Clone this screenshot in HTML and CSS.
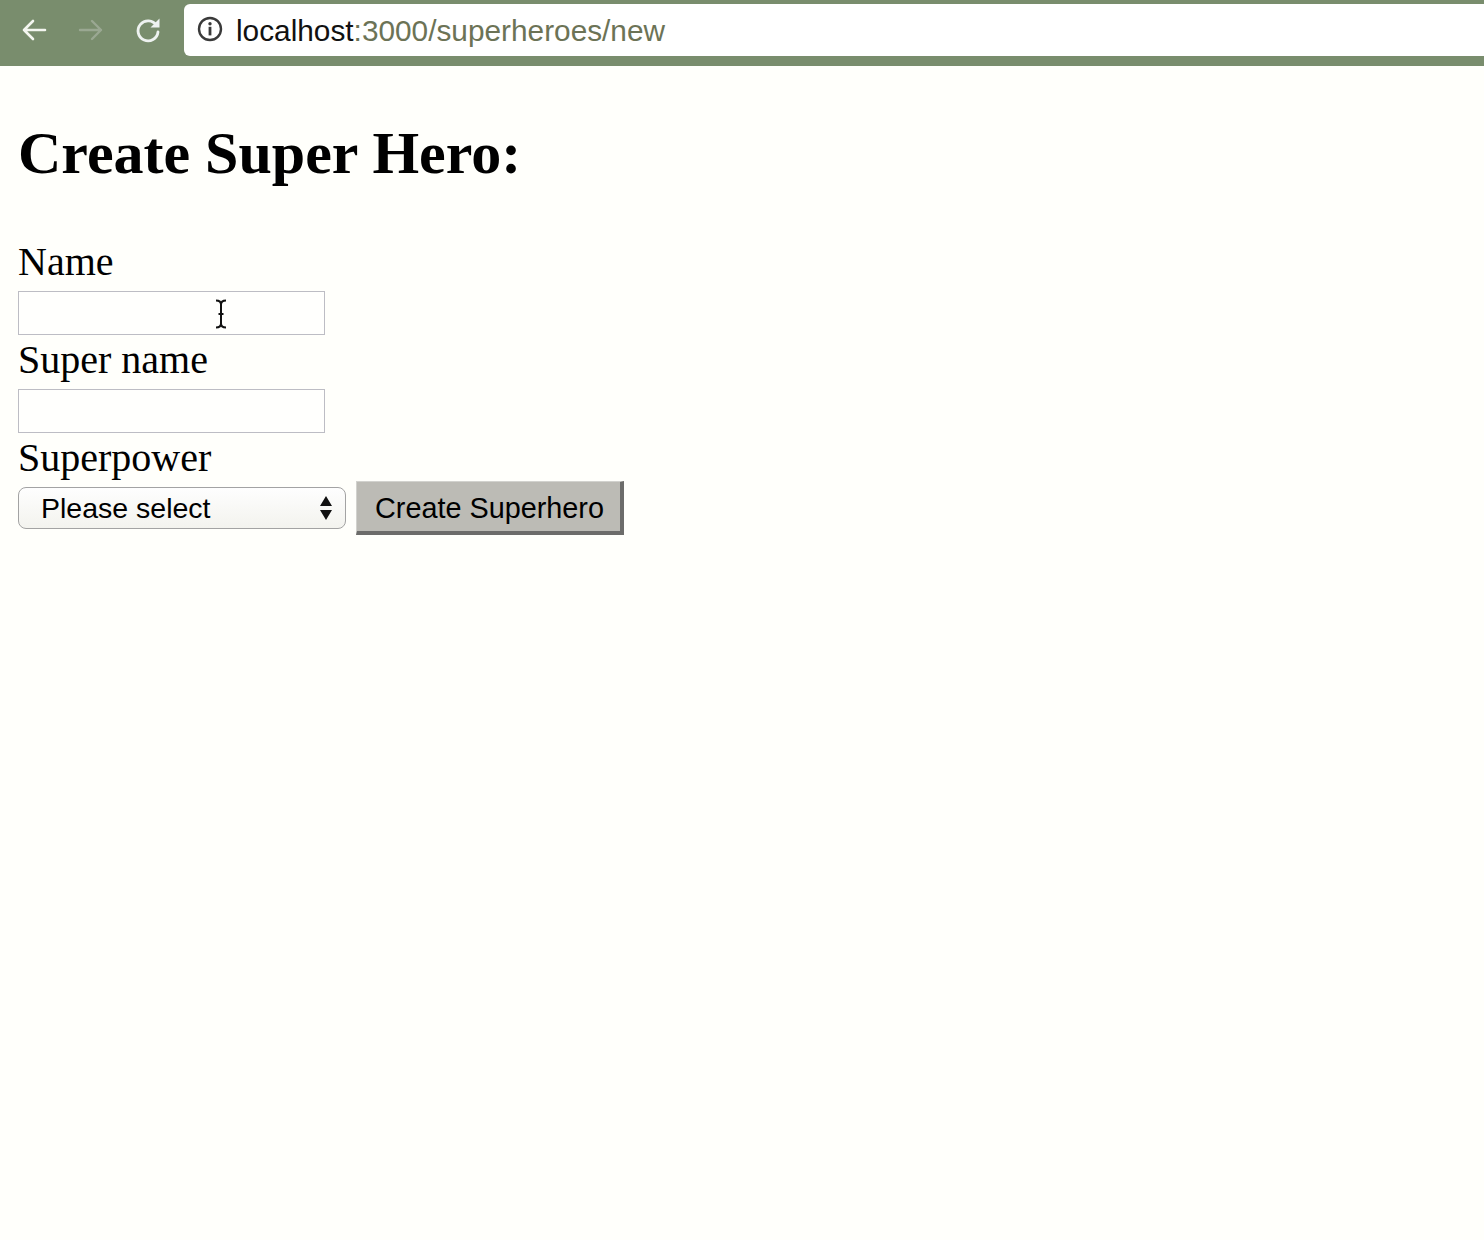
FILE: index.html
```html
<!DOCTYPE html>
<html>
<head>
<meta charset="utf-8">
<title>Create Super Hero</title>
<link rel="stylesheet" href="styles.css">
</head>
<body>
<div class="toolbar">
  <div class="navs">
    <svg class="nav" width="30" height="30" viewBox="0 0 30 30"><path d="M26 15H5M14 6l-9 9 9 9" fill="none" stroke="#f4f6f0" stroke-width="2.6" stroke-linecap="round" stroke-linejoin="round"/></svg>
    <svg class="nav" width="30" height="30" viewBox="0 0 30 30"><path d="M4 15h21M16 6l9 9-9 9" fill="none" stroke="#9aa892" stroke-width="2.4" stroke-linecap="round" stroke-linejoin="round"/></svg>
    <svg class="nav" width="30" height="30" viewBox="0 0 30 30"><path d="M23.5 10.5A10 10 0 1 0 25 17" fill="none" stroke="#eef2f0" stroke-width="2.8" stroke-linecap="round"/><path d="M26.5 3.5v9h-9z" fill="#eef2f0"/></svg>
  </div>
  <div class="omnibox">
    <svg class="info" width="28" height="28" viewBox="0 0 28 28"><circle cx="14" cy="14" r="11" fill="none" stroke="#3a3a3a" stroke-width="2.4"/><circle cx="14" cy="8.8" r="1.7" fill="#3a3a3a"/><rect x="12.6" y="11.8" width="2.8" height="8.6" fill="#3a3a3a"/></svg>
    <span class="url"><span class="host">localhost</span><span class="path">:3000/superheroes/new</span></span>
  </div>
</div>
<main class="page">
  <h1 class="title">Create Super Hero:</h1>
  <form class="form">
    <label class="label" for="name">Name</label>
    <div class="field">
      <input class="text-input" id="name" type="text">
      <svg class="ibeam" width="14" height="30" viewBox="0 0 14 30"><path d="M2 1.5c3 0 5 1.5 5 4v19c0 2.5 2 4 5 4M12 1.5c-3 0-5 1.5-5 4v19c0 2.5-2 4-5 4M4.5 15h5" fill="none" stroke="#111" stroke-width="2"/></svg>
    </div>
    <label class="label" for="supername">Super name</label>
    <div class="field">
      <input class="text-input" id="supername" type="text">
    </div>
    <label class="label last" for="power">Superpower</label>
    <div class="actions">
      <div class="select-wrap">
        <select class="select" id="power"><option>Please select</option></select>
        <svg class="arrows" width="14" height="26" viewBox="0 0 14 26"><path d="M7 1l6 10H1zM7 25l6-10H1z" fill="#111"/></svg>
      </div>
      <button class="button" type="button">Create Superhero</button>
    </div>
  </form>
</main>
</body>
</html>
```

FILE: styles.css
```css
html, body {
  margin: 0;
  padding: 0;
}
body {
  background: #fffffb;
  width: 1484px;
  height: 1240px;
  overflow: hidden;
}
.toolbar {
  height: 66px;
  background: #798d6d;
  display: flex;
  align-items: flex-start;
  padding-top: 4px;
  box-sizing: border-box;
}
.navs {
  display: flex;
  align-items: center;
  height: 52px;
  padding-left: 19px;
  gap: 27px;
  width: 165px;
  box-sizing: border-box;
}
.nav {
  display: block;
}
.omnibox {
  flex: 1;
  height: 52px;
  background: #ffffff;
  border-radius: 6px 0 0 6px;
  margin-left: 19px;
  display: flex;
  align-items: center;
  padding-left: 12px;
}
.info {
  display: block;
  margin-right: 12px;
  margin-bottom: 2px;
}
.url {
  font-family: "Liberation Sans", Arial, sans-serif;
  font-size: 29.8px;
  line-height: 1;
  padding-top: 2px;
}
.host {
  color: #111111;
}
.path {
  color: #6c7356;
}
.page {
  padding: 0 18px;
}
.title {
  font-family: "Liberation Serif", "Times New Roman", serif;
  font-weight: bold;
  font-size: 60px;
  line-height: 60px;
  margin: 57px 0 0 0;
  color: #000;
}
.form {
  margin-top: 54px;
  display: flex;
  flex-direction: column;
  align-items: flex-start;
}
.label {
  display: block;
  font-family: "Liberation Serif", "Times New Roman", serif;
  font-size: 40px;
  line-height: 46px;
  margin: 2px 0 6px 0;
  color: #000;
}
.label.last {
  margin-bottom: 0;
}
.field {
  position: relative;
}
.text-input {
  display: block;
  width: 307px;
  height: 44px;
  box-sizing: border-box;
  border: 1px solid #bdbdc4;
  background: #fffffd;
  margin: 0;
  padding: 0;
  outline: none;
}
.ibeam {
  position: absolute;
  left: 196px;
  top: 8px;
}
.actions {
  display: flex;
  align-items: center;
  gap: 10px;
}
.select-wrap {
  position: relative;
}
.select {
  appearance: none;
  -webkit-appearance: none;
  display: block;
  width: 328px;
  height: 42px;
  box-sizing: border-box;
  border: 1px solid #a3a3a3;
  border-radius: 8px;
  background: linear-gradient(#fefefe, #f3f3ee);
  font-family: "Liberation Sans", Arial, sans-serif;
  font-size: 28.5px;
  color: #000;
  padding: 0 0 0 22px;
  margin: 0;
  outline: none;
}
.arrows {
  position: absolute;
  right: 13px;
  top: 8px;
}
.button {
  height: 54px;
  width: 268px;
  box-sizing: border-box;
  background: #bcbbb5;
  border-style: solid;
  border-width: 1px 4px 4px 1px;
  border-color: #d2d2ce #6c6c6a #6c6c6a #d2d2ce;
  font-family: "Liberation Sans", Arial, sans-serif;
  font-size: 28.8px;
  color: #000;
  padding: 4px 0 0 2px;
  margin: 0;
}
```
